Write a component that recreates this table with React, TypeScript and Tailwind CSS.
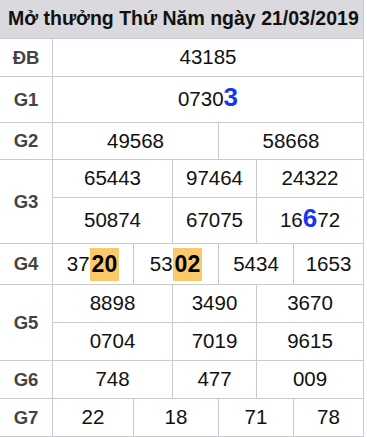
import React from "react";

type Cell = React.ReactNode;

const line = "border-[#c9c9d3]";

const Blue = ({ children }: { children: React.ReactNode }) => (
  <span className="text-[26px] font-bold text-[#1436f5] leading-none">{children}</span>
);

const Hl = ({ children }: { children: React.ReactNode }) => (
  <span className="inline-block bg-[#fbc96b] px-[2px] py-[5px] text-[23px] font-bold text-black leading-none">
    {children}
  </span>
);

function SubRow({ cols, cells, h, last }: { cols: string; cells: Cell[]; h: string; last?: boolean }) {
  return (
    <div className={`grid ${cols} ${h} ${last ? "" : `border-b ${line}`}`}>
      {cells.map((c, i) => (
        <div
          key={i}
          className={`flex items-center justify-center ${i > 0 ? `border-l ${line}` : ""}`}
        >
          {c}
        </div>
      ))}
    </div>
  );
}

function Group({ label, children }: { label: string; children: React.ReactNode }) {
  return (
    <div className={`flex border-b ${line}`}>
      <div
        className={`w-[53px] shrink-0 border-r ${line} flex items-center justify-center text-[18.5px] font-bold text-[#444]`}
      >
        {label}
      </div>
      <div className="flex-1 flex flex-col">{children}</div>
    </div>
  );
}

export default function App() {
  const c3 = "grid-cols-[119px_84px_107px]";
  const c4 = "grid-cols-[80px_85px_75px_70px]";
  return (
    <div
      className="w-[367px] h-[437px] bg-white"
      style={{ fontFamily: '"Liberation Sans", Arial, sans-serif' }}
    >
      <div className={`w-[364px] border-r ${line} text-[20.5px] text-[#111]`}>
        <div className={`h-[39px] bg-[#d9d9de] border-b ${line} flex items-center pl-[8px] text-[19.5px] font-bold text-[#111]`}>
          Mở thưởng Thứ Năm ngày 21/03/2019
        </div>
        <Group label="ĐB">
          <SubRow cols="grid-cols-1" h="h-[37px]" last cells={["43185"]} />
        </Group>
        <Group label="G1">
          <SubRow
            cols="grid-cols-1"
            h="h-[45px]"
            last
            cells={[
              <span className="flex items-baseline">
                0730<Blue>3</Blue>
              </span>,
            ]}
          />
        </Group>
        <Group label="G2">
          <SubRow cols="grid-cols-[165px_145px]" h="h-[36px]" last cells={["49568", "58668"]} />
        </Group>
        <Group label="G3">
          <SubRow cols={c3} h="h-[38px]" cells={["65443", "97464", "24322"]} />
          <SubRow
            cols={c3}
            h="h-[45px]"
            last
            cells={[
              "50874",
              "67075",
              <span className="flex items-baseline">
                16<Blue>6</Blue>72
              </span>,
            ]}
          />
        </Group>
        <Group label="G4">
          <SubRow
            cols={c4}
            h="h-[40px]"
            last
            cells={[
              <span className="flex items-center">
                37<Hl>20</Hl>
              </span>,
              <span className="flex items-center">
                53<Hl>02</Hl>
              </span>,
              "5434",
              "1653",
            ]}
          />
        </Group>
        <Group label="G5">
          <SubRow cols={c3} h="h-[38px]" cells={["8898", "3490", "3670"]} />
          <SubRow cols={c3} h="h-[37px]" last cells={["0704", "7019", "9615"]} />
        </Group>
        <Group label="G6">
          <SubRow cols={c3} h="h-[37px]" last cells={["748", "477", "009"]} />
        </Group>
        <Group label="G7">
          <SubRow cols={c4} h="h-[37px]" last cells={["22", "18", "71", "78"]} />
        </Group>
      </div>
    </div>
  );
}
